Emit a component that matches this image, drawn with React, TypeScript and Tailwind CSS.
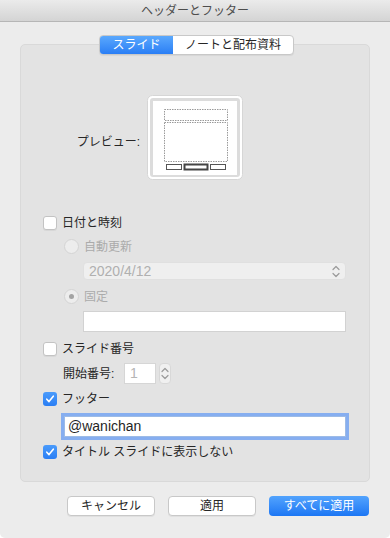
import React from "react";

const font = { fontFamily: '"Liberation Sans", "Noto Sans CJK JP", sans-serif' };

function Checkbox({ checked }: { checked?: boolean }) {
  if (checked) {
    return (
      <div className="w-[14px] h-[14px] rounded-[3px] bg-gradient-to-b from-[#4a9bfb] to-[#2a7ef4] flex items-center justify-center shrink-0">
        <svg width="10" height="10" viewBox="0 0 10 10">
          <path d="M1.8 5.2 L4 7.6 L8.3 2.2" fill="none" stroke="white" strokeWidth="1.6" strokeLinecap="round" strokeLinejoin="round" />
        </svg>
      </div>
    );
  }
  return <div className="w-[14px] h-[14px] rounded-[3px] bg-white border border-[#c3c3c3] shadow-[0_1px_0_rgba(0,0,0,0.05)] shrink-0" />;
}

function Radio({ selected }: { selected?: boolean }) {
  return (
    <div className="w-[15px] h-[15px] rounded-full bg-[#ededed] border border-[#d4d4d4] flex items-center justify-center shrink-0">
      {selected && <div className="w-[5px] h-[5px] rounded-full bg-[#a3a3a3]" />}
    </div>
  );
}

function UpDown({ color = "#8a8a8a" }: { color?: string }) {
  return (
    <svg width="8" height="13" viewBox="0 0 8 13">
      <path d="M1 4.5 L4 1.5 L7 4.5" fill="none" stroke={color} strokeWidth="1.2" strokeLinecap="round" strokeLinejoin="round" />
      <path d="M1 8.5 L4 11.5 L7 8.5" fill="none" stroke={color} strokeWidth="1.2" strokeLinecap="round" strokeLinejoin="round" />
    </svg>
  );
}

function Preview() {
  return (
    <svg width="96" height="85" viewBox="0 0 96 85">
      <rect x="0.5" y="0.5" width="95" height="84" rx="5" fill="#ffffff" stroke="#d6d6d6" />
      <rect x="3" y="3" width="90" height="79" rx="3" fill="#dcdcdc" />
      <rect x="6" y="6" width="84" height="74" fill="#ffffff" />
      <rect x="17.5" y="14.5" width="63" height="11" fill="none" stroke="#9a9a9a" strokeWidth="1" strokeDasharray="1.5 1" />
      <rect x="17.5" y="27.5" width="63" height="39" fill="none" stroke="#9a9a9a" strokeWidth="1" strokeDasharray="1.5 1" />
      <rect x="19.5" y="69.5" width="15" height="5" fill="none" stroke="#555" strokeWidth="1" />
      <rect x="37.5" y="69.5" width="23" height="5" fill="none" stroke="#444" strokeWidth="2" />
      <rect x="63.5" y="69.5" width="15" height="5" fill="none" stroke="#555" strokeWidth="1" />
    </svg>
  );
}

export default function App() {
  return (
    <div style={font} className="w-[390px] h-[538px] bg-[#ececec] rounded-b-[5px] overflow-hidden text-[12px] text-[#262626] flex flex-col">
      <div className="h-[22px] shrink-0 bg-gradient-to-b from-[#ebebeb] to-[#d4d4d4] border-b border-[#b6b6b6] flex items-center justify-center text-[12px] text-[#4d4d4d]">
        ヘッダーとフッター
      </div>

      <div className="relative z-10 mt-[13px] self-center ml-[3px] flex h-[20px] rounded-[4px] border border-[#c8c8c8] bg-white overflow-hidden shadow-[0_1px_1px_rgba(0,0,0,0.06)]">
        <div className="w-[73px] flex items-center justify-center bg-gradient-to-b from-[#5aa8fd] to-[#2a7ef5] text-white">スライド</div>
        <div className="w-[120px] flex items-center justify-center text-[#262626]">ノートと配布資料</div>
      </div>

      <div className="-mt-[11px] mx-[20px] h-[438px] rounded-[5px] bg-[#e3e3e3] border border-[#d9d9d9] flex flex-col">
        <div className="mt-[50px] grid grid-cols-[1fr_auto_1fr] items-center">
          <div className="justify-self-end mr-[7px] pt-[8px] text-[#262626]">プレビュー:</div>
          <Preview />
          <div />
        </div>

        <div className="mt-[36px] ml-[22px] flex items-center h-[14px] gap-[5px]">
          <Checkbox />
          <span>日付と時刻</span>
        </div>

        <div className="mt-[9px] ml-[43px] flex items-center h-[15px] gap-[5px] text-[#ababab]">
          <Radio />
          <span>自動更新</span>
        </div>

        <div className="mt-[8px] ml-[62px] w-[263px] h-[18px] rounded-[4px] bg-[#efefef] border border-[#e0e0e0] flex items-center justify-between pl-[5px] pr-[5px] text-[14px] text-[#b0b0b0]">
          <span>2020/4/12</span>
          <UpDown color="#9a9a9a" />
        </div>

        <div className="mt-[9px] ml-[43px] flex items-center h-[15px] gap-[5px] text-[#ababab]">
          <Radio selected />
          <span>固定</span>
        </div>

        <div className="mt-[7px] ml-[62px] w-[263px] h-[21px] bg-white border border-[#d2d2d2]" />

        <div className="mt-[10px] ml-[22px] flex items-center h-[14px] gap-[5px]">
          <Checkbox />
          <span>スライド番号</span>
        </div>

        <div className="mt-[7px] ml-[42px] flex items-center h-[21px]">
          <span className="w-[61px]">開始番号:</span>
          <div className="w-[32px] h-[21px] bg-white border border-[#d6d6d6] flex items-center pl-[5px] text-[14px] text-[#b5b5b5]">1</div>
          <div className="ml-[3px] w-[12px] h-[21px] rounded-[4px] bg-[#f0f0f0] border border-[#d8d8d8] flex items-center justify-center">
            <UpDown color="#9a9a9a" />
          </div>
        </div>

        <div className="mt-[8px] ml-[22px] flex items-center h-[14px] gap-[5px]">
          <Checkbox checked />
          <span>フッター</span>
        </div>

        <div className="mt-[10px] ml-[43px] w-[282px] h-[21px] bg-white border border-[#9dbbe6] shadow-[0_0_0_3px_#86aef0] flex items-center pl-[3px] text-[14px] text-[#1f1f1f]">
          @wanichan
        </div>

        <div className="mt-[8px] ml-[22px] flex items-center h-[14px] gap-[5px]">
          <Checkbox checked />
          <span>タイトル スライドに表示しない</span>
        </div>
      </div>

      <div className="mt-[14px] flex justify-end gap-[13px] pr-[21px]">
        <div className="w-[88px] h-[20px] rounded-[4px] bg-white border border-[#c8c8c8] shadow-[0_1px_0_rgba(0,0,0,0.05)] flex items-center justify-center">キャンセル</div>
        <div className="w-[88px] h-[20px] rounded-[4px] bg-white border border-[#c8c8c8] shadow-[0_1px_0_rgba(0,0,0,0.05)] flex items-center justify-center">適用</div>
        <div className="w-[100px] h-[20px] rounded-[4px] bg-gradient-to-b from-[#52a3fd] to-[#1b76f4] text-white flex items-center justify-center">すべてに適用</div>
      </div>
    </div>
  );
}
